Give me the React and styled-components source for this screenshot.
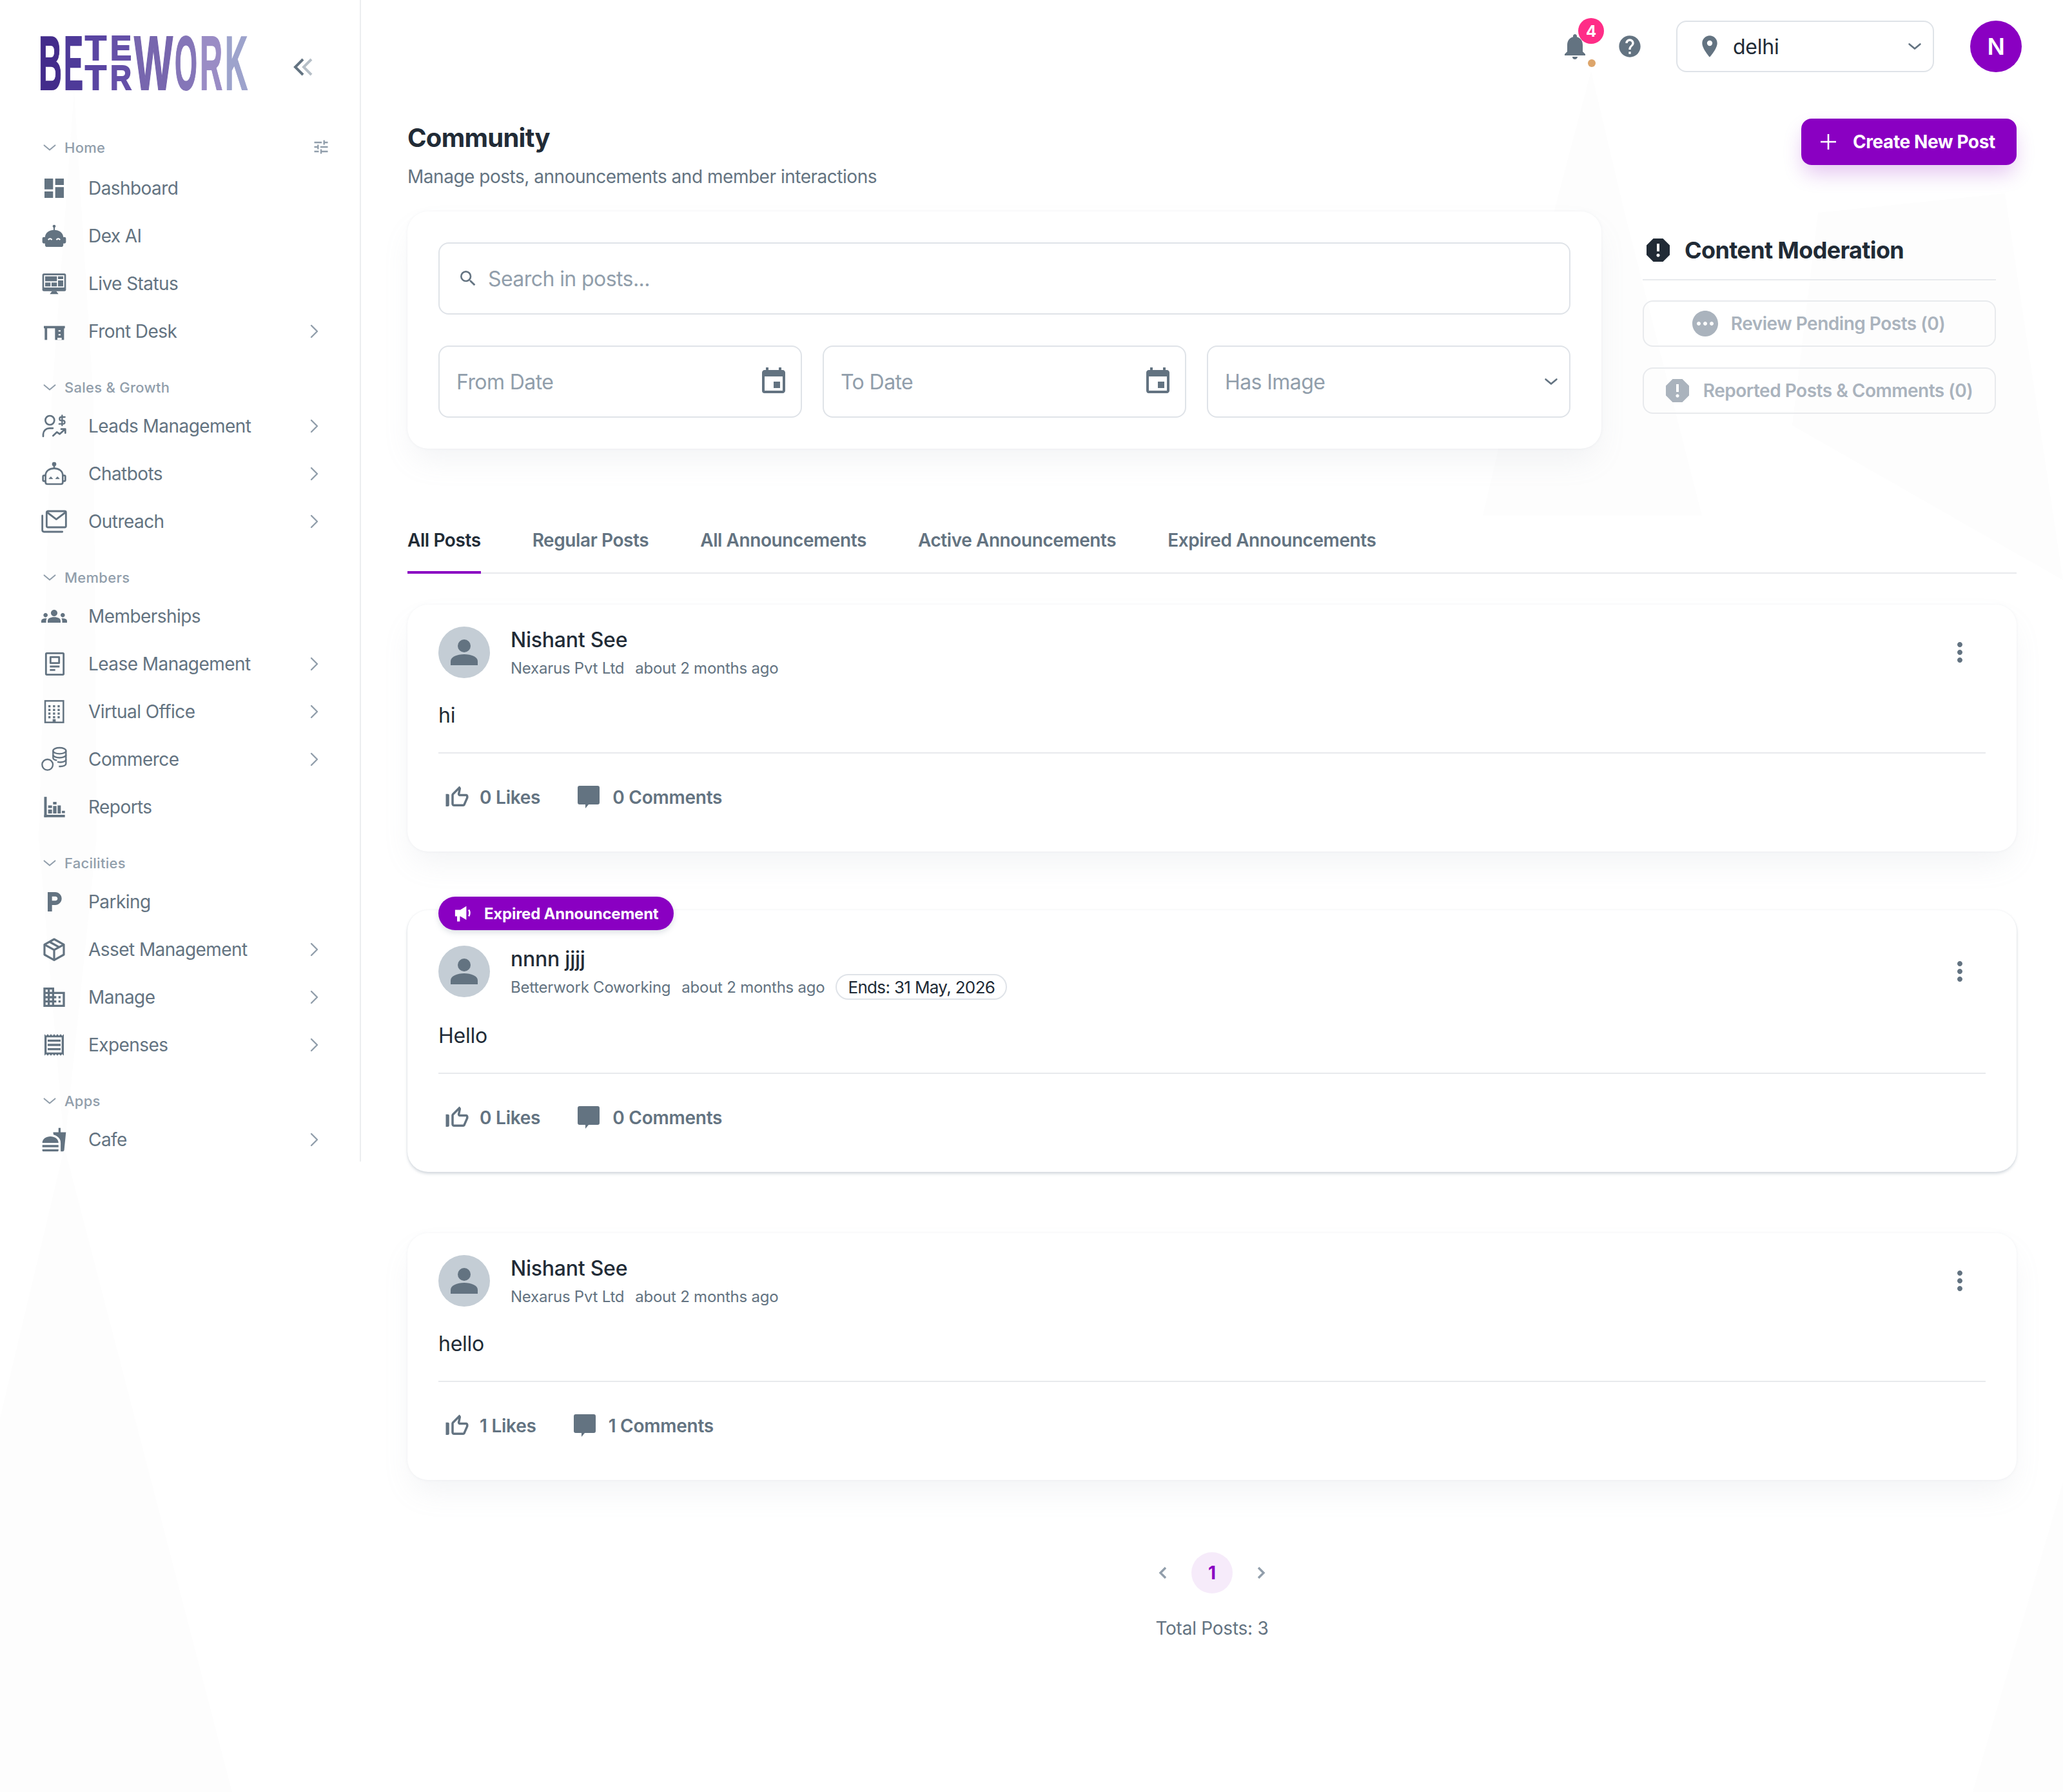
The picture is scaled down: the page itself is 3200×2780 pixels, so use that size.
import React from "react";
import styled, { createGlobalStyle } from "styled-components";
import {
  MdDashboard, MdGroups, MdLocalParking, MdDomain, MdOutlineReceipt, MdFastfood, MdTune,
  MdNotifications, MdHelp, MdLocationOn, MdEvent, MdSearch, MdPending, MdReport,
  MdThumbUpOffAlt, MdMoreVert,
} from "react-icons/md";

const Global = createGlobalStyle`
  html, body { margin: 0; padding: 0; background: #fff; }
  body { font-family: "Inter", "Liberation Sans", sans-serif; color: #212b36; letter-spacing: -0.015em; }
  * { box-sizing: border-box; }
`;

const PURPLE = "#8a00c2";
const GREY = "#637381";
const LIGHT = "#919eab";

const Page = styled.div`
  position: relative;
  width: 3200px;
  min-height: 2780px;
  display: flex;
  align-items: flex-start;
  overflow: hidden;
`;
const Backdrop = styled.svg`
  position: absolute;
  inset: 0;
  z-index: 0;
`;
const Sidebar = styled.aside`
  position: relative;
  z-index: 1;
  flex: none;
  width: 560px;
  height: 1802px;
  border-right: 2px solid #eceef0;
`;
const LogoRow = styled.div`
  height: 209px;
  padding: 54px 0 0 61px;
  display: flex;
  align-items: flex-start;
`;
const LogoArt = styled.svg`
  overflow: visible;
  flex: none;
`;
const Collapse = styled.svg`
  margin: 36px 0 0 68px;
  flex: none;
`;
const Section = styled.section`
  margin-bottom: 34px;
  padding: 0 61px 0 64px;
`;
const SectionHead = styled.div`
  position: relative;
  display: flex;
  align-items: center;
  height: 40px;
  margin-bottom: ${(p) => p.$gap}px;
  color: ${LIGHT};
  font-size: 22px;
  font-weight: 500;
  letter-spacing: 0.012em;
`;
const SectionLabel = styled.span`
  margin-left: 11px;
`;
const SectionChevron = styled.span`
  display: flex;
  margin-left: 1px;
`;
const Tune = styled.span`
  position: absolute;
  right: -15px;
  top: 5px;
  display: flex;
  color: ${LIGHT};
`;
const NavRow = styled.div`
  display: flex;
  align-items: center;
  height: 66px;
  margin-bottom: 8px;
  color: ${GREY};
  font-size: 28px;
  letter-spacing: -0.02em;
  &:last-child { margin-bottom: 0; }
`;
const NavIcon = styled.span`
  flex: none;
  display: flex;
  width: 40px;
  height: 40px;
  margin-right: 33px;
  color: ${GREY};
`;
const NavArrow = styled.svg`
  margin-left: auto;
  flex: none;
  color: ${LIGHT};
`;

const Main = styled.main`
  position: relative;
  z-index: 1;
  flex: 1;
  min-width: 0;
  padding: 0 72px;
`;
const TopBar = styled.header`
  display: flex;
  justify-content: flex-end;
  align-items: center;
  height: 144px;
  margin-right: -8px;
`;
const Bell = styled.div`
  position: relative;
  display: flex;
  color: ${GREY};
  margin-right: 41px;
`;
const BellCount = styled.span`
  position: absolute;
  left: 29px;
  top: -20px;
  width: 40px;
  height: 40px;
  border-radius: 50%;
  background: #ff2d87;
  color: #fff;
  font-size: 24px;
  font-weight: 700;
  display: flex;
  align-items: center;
  justify-content: center;
`;
const BellDot = styled.span`
  position: absolute;
  left: 44px;
  top: 44px;
  width: 12px;
  height: 12px;
  border-radius: 50%;
  background: #dda56b;
`;
const HelpIcon = styled.span`
  display: flex;
  color: ${GREY};
  margin-right: 52px;
`;
const LocationSelect = styled.div`
  display: flex;
  align-items: center;
  width: 400px;
  height: 80px;
  padding: 0 16px 0 30px;
  border: 2px solid #dfe3e8;
  border-radius: 16px;
  background: #fff;
  font-size: 32px;
  color: #212b36;
  margin-right: 56px;
`;
const PinIcon = styled.span`
  display: flex;
  color: ${GREY};
  margin-right: 16px;
`;
const Avatar = styled.div`
  width: 80px;
  height: 80px;
  border-radius: 50%;
  background: ${PURPLE};
  color: #fff;
  font-size: 36px;
  font-weight: 600;
  display: flex;
  align-items: center;
  justify-content: center;
`;
const PageHead = styled.div`
  display: flex;
  justify-content: space-between;
  align-items: flex-start;
  height: 184px;
  padding-top: 40px;
`;
const Title = styled.h1`
  margin: 0;
  font-size: 40px;
  line-height: 60px;
  font-weight: 700;
  letter-spacing: -0.018em;
  color: #212b36;
`;
const Subtitle = styled.p`
  margin: 8px 0 0;
  font-size: 28px;
  line-height: 44px;
  letter-spacing: -0.017em;
  color: ${GREY};
`;
const CreateButton = styled.button`
  display: flex;
  align-items: center;
  width: 334px;
  height: 72px;
  padding: 0 0 0 28px;
  margin: 0;
  border: 0;
  border-radius: 16px;
  background: ${PURPLE};
  color: #fff;
  font: 700 28px "Inter", sans-serif;
  letter-spacing: -0.015em;
  box-shadow: 0 16px 32px -4px rgba(138, 0, 194, 0.24);
`;
const PlusIcon = styled.svg`
  margin-right: 24px;
  flex: none;
`;
const FilterRow = styled.div`
  display: flex;
  align-items: flex-start;
`;
const FilterCard = styled.div`
  width: 1852px;
  height: 368px;
  padding: 48px;
  background: #fff;
  border-radius: 32px;
  box-shadow: 0 0 4px rgba(145, 158, 171, 0.12), 0 24px 48px -8px rgba(145, 158, 171, 0.12);
`;
const Field = styled.div`
  display: flex;
  align-items: center;
  height: 112px;
  width: ${(p) => p.$width};
  padding: ${(p) => p.$pad};
  border: 2px solid #dfe3e8;
  border-radius: 16px;
  background: #fff;
  color: ${LIGHT};
  font-size: 32px;
  letter-spacing: -0.018em;
`;
const FieldRow = styled.div`
  display: flex;
  gap: 32px;
  margin-top: 48px;
`;
const FieldIcon = styled.span`
  display: flex;
  color: ${GREY};
  margin-right: ${(p) => p.$gap || 0}px;
  margin-left: ${(p) => (p.$end ? "auto" : "0")};
`;
const Moderation = styled.aside`
  width: 548px;
  margin-left: 64px;
  padding-top: 36px;
`;
const ModHead = styled.div`
  display: flex;
  align-items: center;
  gap: 17px;
  height: 48px;
  font-size: 36px;
  font-weight: 700;
  letter-spacing: -0.018em;
  color: #212b36;
  margin-bottom: 21px;
`;
const ModDivider = styled.hr`
  margin: 0 0 31px;
  border: 0;
  height: 2px;
  background: #e8eaed;
`;
const ModButton = styled.div`
  display: flex;
  align-items: center;
  justify-content: center;
  gap: 16px;
  height: 72px;
  margin-bottom: 32px;
  padding-right: 6px;
  border: 2px solid #e8eaed;
  border-radius: 16px;
  color: #aab3bd;
  font-size: 28px;
  font-weight: 600;
  letter-spacing: -0.0175em;
`;
const ModIcon = styled.span`
  display: flex;
`;
const Tabs = styled.nav`
  display: flex;
  gap: 80px;
  height: 96px;
  margin-top: 98px;
  margin-bottom: 48px;
  border-bottom: 2px solid #e8eaed;
`;
const Tab = styled.div`
  position: relative;
  height: 96px;
  line-height: 88px;
  font-size: 28px;
  font-weight: 600;
  letter-spacing: -0.015em;
  color: ${(p) => (p.$active ? "#212b36" : GREY)};
  &::after {
    content: "";
    display: ${(p) => (p.$active ? "block" : "none")};
    position: absolute;
    left: 0;
    right: 0;
    bottom: 0;
    height: 4px;
    background: ${PURPLE};
  }
`;
const PostCard = styled.article`
  position: relative;
  padding: ${(p) => (p.$badge ? 55 : 34)}px 48px 48px;
  margin-top: ${(p) => p.$top}px;
  background: #fff;
  border-radius: 32px;
  box-shadow: ${(p) =>
    p.$badge
      ? "0 0 3px rgba(145,158,171,.14), 0 3px 4px rgba(145,158,171,.36)"
      : "0 0 4px rgba(145,158,171,.12), 0 24px 48px -8px rgba(145,158,171,.12)"};
`;
const Badge = styled.div`
  position: absolute;
  left: 48px;
  top: -21px;
  display: flex;
  align-items: center;
  gap: 17px;
  height: 52px;
  padding: 0 24px;
  border-radius: 26px;
  background: ${PURPLE};
  color: #fff;
  font-size: 24px;
  font-weight: 700;
  box-shadow: 0 4px 8px rgba(145, 158, 171, 0.3);
`;
const PostHead = styled.div`
  display: flex;
  align-items: flex-start;
  height: ${(p) => (p.$tall ? 86 : 84)}px;
`;
const PostAvatar = styled.div`
  flex: none;
  width: 80px;
  height: 80px;
  border-radius: 50%;
  background: #c4cdd5;
  display: flex;
  align-items: center;
  justify-content: center;
  color: ${GREY};
  margin-right: 32px;
`;
const Author = styled.div`
  display: flex;
  flex-direction: column;
  min-width: 0;
`;
const AuthorName = styled.div`
  font-size: 32px;
  line-height: 42px;
  font-weight: 500;
  color: #212b36;
`;
const Meta = styled.div`
  display: flex;
  align-items: center;
  gap: 17px;
  height: 44px;
  font-size: 24px;
  color: ${GREY};
`;
const EndChip = styled.span`
  display: flex;
  align-items: center;
  height: 40px;
  padding: 0 17px;
  border: 2px solid #dfe3e8;
  border-radius: 20px;
  font-size: 26px;
  letter-spacing: -0.025em;
  color: #212b36;
`;
const MenuButton = styled.span`
  margin-left: auto;
  display: flex;
  align-items: center;
  justify-content: center;
  width: 80px;
  height: 80px;
  color: ${GREY};
`;
const PostBody = styled.p`
  margin: 30px 0 33px;
  font-size: 32px;
  line-height: 48px;
  color: #212b36;
`;
const PostDivider = styled.hr`
  margin: 0;
  border: 0;
  height: 2px;
  background: #e8eaed;
`;
const Actions = styled.div`
  display: flex;
  align-items: center;
  height: 72px;
  margin-top: 32px;
  padding-left: 8px;
`;
const Action = styled.div`
  display: flex;
  align-items: center;
  gap: ${(p) => p.$gap}px;
  margin-right: 58px;
  color: ${GREY};
  font-size: 28px;
  font-weight: 600;
`;
const ActionIcon = styled.span`
  display: flex;
`;
const Pager = styled.div`
  display: flex;
  justify-content: center;
  align-items: center;
  gap: 12px;
  margin-top: 112px;
`;
const PageArrow = styled.span`
  display: flex;
  align-items: center;
  justify-content: center;
  width: 64px;
  height: 64px;
  color: ${LIGHT};
`;
const PageNumber = styled.span`
  display: flex;
  align-items: center;
  justify-content: center;
  width: 64px;
  height: 64px;
  border-radius: 50%;
  background: rgba(138, 0, 194, 0.08);
  color: ${PURPLE};
  font-size: 28px;
  font-weight: 700;
`;
const Total = styled.div`
  margin-top: 32px;
  text-align: center;
  font-size: 28px;
  line-height: 44px;
  color: ${GREY};
`;

const S = { viewBox: "0 0 24 24", width: 40, height: 40 };
const line = { fill: "none", stroke: "currentColor", strokeWidth: 1.6, strokeLinecap: "round", strokeLinejoin: "round" };

const RobotFill = () => (
  <svg {...S} fill="currentColor">
    <circle cx="12" cy="3" r="1.4" />
    <rect x="11.4" y="3" width="1.2" height="4" />
    <path d="M3.5 13.5C3.5 9 7.5 6.5 12 6.5s8.5 2.500 8.500 7v6.700a2 2 0 0 1-2 2h-13a2 2 0 0 1-2-2z" />
    <rect x="1" y="13" width="3.5" height="6" rx="1.4" />
    <rect x="19.5" y="13" width="3.5" height="6" rx="1.4" />
    <path d="M6.5 15.7q1.7-2.4 3.4 0M14.1 15.7q1.7-2.4 3.4 0" fill="none" stroke="#fff" strokeWidth="1.2" />
  </svg>
);
const Monitor = () => (
  <svg {...S} fill="currentColor">
    <rect x="1" y="2.5" width="22" height="16.5" rx="1.5" />
    <rect x="2.6" y="4.2" width="18.8" height="11.4" fill="#fff" />
    <rect x="3.6" y="5.2" width="11" height="4.6" />
    <rect x="3.6" y="11" width="5" height="3.6" />
    <rect x="9.6" y="11" width="5" height="3.6" />
    <rect x="15.6" y="5.2" width="4.8" height="2.6" />
    <rect x="15.6" y="9" width="4.8" height="5.6" />
    <path d="M10 19h4l2 2.8H8z" />
  </svg>
);
const Desk = () => (
  <svg {...S} fill="currentColor">
    <rect x="2.4" y="7" width="19.6" height="2.2" />
    <rect x="3.2" y="9" width="2.3" height="11" />
    <rect x="12.8" y="9" width="8.4" height="11" />
    <rect x="16" y="11" width="2" height="1.2" fill="#fff" />
    <rect x="16" y="14.6" width="2" height="1.2" fill="#fff" />
    <rect x="15" y="18" width="4" height="2" fill="#fff" />
  </svg>
);
const Leads = () => (
  <svg {...S} {...line}>
    <circle cx="8" cy="6.6" r="4.2" />
    <path d="M1.8 21.6v-2a5.8 5.8 0 0 1 5.8-5.6h3.2" />
    <path d="M11 21l3.6-3.4 2.6 1.8 5-4.6M18.6 14.8h3.8v3.6" />
    <path d="M22 3.6h-3.4a1.5 1.5 0 0 0 0 3.2h1.7a1.5 1.5 0 0 1 0 3.2h-3.6M19.4 2v9.4" strokeWidth="1.4" />
  </svg>
);
const RobotLine = () => (
  <svg {...S} fill="none" stroke="currentColor" strokeWidth="1.6" strokeLinejoin="round">
    <circle cx="12" cy="3" r="1.2" fill="currentColor" />
    <path d="M12 3v3.6" />
    <path d="M4 13.5C4 9.4 7.6 7 12 7s8 2.4 8 6.5v6.5a1.6 1.6 0 0 1-1.6 1.6H5.6A1.6 1.6 0 0 1 4 20z" />
    <path d="M4 13.6H2.6a1 1 0 0 0-1 1v3.2a1 1 0 0 0 1 1H4M20 13.6h1.4a1 1 0 0 1 1 1v3.2a1 1 0 0 1-1 1H20" />
    <path d="M7.2 16.6l1.7-1.8 1.7 1.8zM13.4 16.6l1.7-1.8 1.7 1.8z" fill="currentColor" strokeWidth="0.6" />
  </svg>
);
const MailStack = () => (
  <svg {...S} {...line} strokeWidth="1.7">
    <rect x="5" y="2.4" width="18" height="15" rx="1.2" />
    <path d="M5.6 3.6l8.4 6.4 8.4-6.4" />
    <path d="M1 6.6v13.4a1.6 1.6 0 0 0 1.6 1.6h17" />
  </svg>
);
const LeaseDoc = () => (
  <svg {...S} fill="none" stroke="currentColor" strokeWidth="1.7" strokeLinejoin="round">
    <rect x="4.4" y="2" width="16.4" height="20" rx="0.8" />
    <rect x="8.6" y="5.6" width="8" height="5.6" />
    <path d="M8 14.4h9M8 17.6h5" />
  </svg>
);
const OfficeGrid = () => (
  <svg {...S}>
    <rect x="3.6" y="2" width="17" height="20" fill="none" stroke="currentColor" strokeWidth="1.5" />
    {[6, 9.4, 12.8, 16.2].map((y) =>
      [6.6, 10.9, 15.2].map((x) => <rect key={`${x}-${y}`} x={x} y={y} width="2" height="2" fill="currentColor" />)
    )}
    <rect x="10.6" y="19" width="2.8" height="3" fill="currentColor" />
  </svg>
);
const Coins = () => (
  <svg {...S} fill="none" stroke="currentColor" strokeWidth="1.4">
    <circle cx="5.8" cy="17" r="5" />
    <ellipse cx="17" cy="4" rx="6" ry="2.8" />
    <path d="M11 4v6.600c0 1 1.600 2 3.600 2.400M23 4v12c0 1.500-2.200 2.600-5 2.600h-1.600" />
    <path d="M11 7.800c0 1.500 2.700 2.700 6 2.700s6-1.200 6-2.700M15 14.300c1 .3 2 .4 3 .4 2.600 0 5-1 5-2.700" />
  </svg>
);
const Bars = () => (
  <svg {...S} fill="currentColor">
    <rect x="2.700" y="2.500" width="2.400" height="19" />
    <rect x="2.700" y="19.200" width="19.300" height="2.300" />
    <rect x="6.400" y="10.500" width="3.600" height="2.400" />
    <rect x="6.400" y="14.300" width="3.600" height="3.700" />
    <rect x="11" y="7.200" width="3.200" height="2.400" />
    <rect x="11" y="11" width="3.200" height="7" />
    <rect x="15.200" y="10.500" width="3" height="7.500" />
    <rect x="19.200" y="15.500" width="2.800" height="2.200" />
  </svg>
);
const Cube = () => (
  <svg {...S} fill="none" stroke="currentColor" strokeWidth="1.9" strokeLinejoin="round">
    <path d="M12 2.400l9 5v9.400l-9 5-9-5V7.400z" />
    <path d="M3 7.400l9 5 9-5M12 12.400v9.400M7.600 4.800l9 5" />
  </svg>
);
const Megaphone = () => (
  <svg width="30" height="30" viewBox="0 0 24 24" fill="#fff">
    <path d="M1.500 7.500H8L15.500 3v17L8 15.500H7.500V22H4v-6.500H1.500z" />
    <path d="M18.500 7.500q2.200 4 0 8" fill="none" stroke="#fff" strokeWidth="2" />
  </svg>
);

const Down = ({ size = 20, width = 2.2 }) => (
  <svg width={size} height={size} viewBox="0 0 20 20" fill="none" stroke="currentColor" strokeWidth={width} strokeLinecap="round" strokeLinejoin="round">
    <path d="M3 7l7 6 7-6" />
  </svg>
);
const Arrow = () => (
  <NavArrow width="20" height="24" viewBox="0 0 20 24" fill="none" stroke="currentColor" strokeWidth="2.400" strokeLinecap="round" strokeLinejoin="round">
    <path d="M6 3l9 9-9 9" />
  </NavArrow>
);
const ThickArrow = ({ d }) => (
  <svg width="24" height="24" viewBox="0 0 24 24" fill="none" stroke="currentColor" strokeWidth="3.400">
    <path d={d} />
  </svg>
);
const PersonShape = () => (
  <svg width="42" height="40" viewBox="0 0 42 40" fill="currentColor">
    <circle cx="21" cy="10" r="10" />
    <path d="M0 40v-6c0-7 10-11 21-11s21 4 21 11v6z" />
  </svg>
);
const CommentShape = () => (
  <svg width="34" height="36" viewBox="0 0 34 36" fill="currentColor">
    <path d="M3 0h28a3 3 0 0 1 3 3v23a3 3 0 0 1-3 3H17l-5 6v-6H3a3 3 0 0 1-3-3V3a3 3 0 0 1 3-3z" />
  </svg>
);

const LogoText = ({ x, w, y, size, fill, children }) => (
  <text x={x} y={y} fontSize={size} fontWeight="700" fontFamily="'Liberation Sans', sans-serif" fill={fill} stroke={fill} strokeWidth="2" letterSpacing="0" textLength={w} lengthAdjust="spacingAndGlyphs">
    {children}
  </text>
);
const Logo = () => (
  <LogoArt width="326" height="90" viewBox="0 0 326 90" role="img" aria-label="Betterwork">
    <LogoText x={-1} w={36} y={85} size={118} fill="#432c8b">B</LogoText>
    <LogoText x={38} w={30} y={85} size={118} fill="#4e3a99">E</LogoText>
    <LogoText x={71} w={33} y={39} size={54} fill="#5a45a2">T</LogoText>
    <LogoText x={110} w={33} y={39} size={54} fill="#6550a8">E</LogoText>
    <LogoText x={71} w={33} y={85} size={54} fill="#5a45a2">T</LogoText>
    <LogoText x={110} w={33} y={85} size={54} fill="#6550a8">R</LogoText>
    <LogoText x={147} w={60} y={85} size={118} fill="#7766ae">W</LogoText>
    <LogoText x={210} w={35} y={85} size={118} fill="#8576b8">O</LogoText>
    <LogoText x={249} w={35} y={85} size={118} fill="#9a8cc5">R</LogoText>
    <LogoText x={288} w={35} y={85} size={118} fill="#9da3cc">K</LogoText>
  </LogoArt>
);

const NAV = [
  { head: "Home", tune: true, gap: 10, items: [
    ["Dashboard", <MdDashboard size={40} />],
    ["Dex AI", <RobotFill />],
    ["Live Status", <Monitor />],
    ["Front Desk", <Desk />, true],
  ]},
  { head: "Sales & Growth", gap: 7, items: [
    ["Leads Management", <Leads />, true],
    ["Chatbots", <RobotLine />, true],
    ["Outreach", <MailStack />, true],
  ]},
  { head: "Members", gap: 7, items: [
    ["Memberships", <MdGroups size={40} />],
    ["Lease Management", <LeaseDoc />, true],
    ["Virtual Office", <OfficeGrid />, true],
    ["Commerce", <Coins />, true],
    ["Reports", <Bars />],
  ]},
  { head: "Facilities", gap: 7, items: [
    ["Parking", <MdLocalParking size={40} />],
    ["Asset Management", <Cube />, true],
    ["Manage", <MdDomain size={40} />, true],
    ["Expenses", <MdOutlineReceipt size={40} />, true],
  ]},
  { head: "Apps", gap: 7, items: [["Cafe", <MdFastfood size={40} />, true]] },
];

const POSTS = [
  { top: 0, name: "Nishant See", org: "Nexarus Pvt Ltd", body: "hi", likes: 0, comments: 0 },
  { top: 91, name: "nnnn jjjj", org: "Betterwork Coworking", body: "Hello", likes: 0, comments: 0, badge: "Expired Announcement", ends: "Ends: 31 May, 2026" },
  { top: 95, name: "Nishant See", org: "Nexarus Pvt Ltd", body: "hello", likes: 1, comments: 1 },
];

const TABS = ["All Posts", "Regular Posts", "All Announcements", "Active Announcements", "Expired Announcements"];

export default function App() {
  return (
    <Page>
      <Global />
      <Backdrop width="3200" height="2780" viewBox="0 0 3200 2780">
        <g fill="#fdfdfd">
          <polygon points="115,140 80,620 60,1300 100,1780 150,1300 145,620" />
          <polygon points="100,1780 0,2200 0,2780 360,2780" />
          <polygon points="2468,110 2410,330 2300,800 2640,800 2520,330" />
          <polygon points="2820,330 2780,660 3200,900 3110,300" />
          <polygon points="3200,2300 3060,2780 3200,2780" />
        </g>
      </Backdrop>

      <Sidebar>
        <LogoRow>
          <Logo />
          <Collapse width="30" height="28" viewBox="0 0 30 28" fill="none" strokeWidth="4">
            <path d="M15 2L3 14l12 12" stroke={GREY} />
            <path d="M28 2L16 14l12 12" stroke="#b6bfc7" />
          </Collapse>
        </LogoRow>
        {NAV.map((section) => (
          <Section key={section.head}>
            <SectionHead $gap={section.gap}>
              <SectionChevron>
                <Down size={24} width={1.700} />
              </SectionChevron>
              <SectionLabel>{section.head}</SectionLabel>
              {section.tune && (
                <Tune>
                  <MdTune size={28} />
                </Tune>
              )}
            </SectionHead>
            {section.items.map(([label, icon, more]) => (
              <NavRow key={label}>
                <NavIcon>{icon}</NavIcon>
                {label}
                {more && <Arrow />}
              </NavRow>
            ))}
          </Section>
        ))}
      </Sidebar>

      <Main>
        <TopBar>
          <Bell>
            <MdNotifications size={48} />
            <BellCount>4</BellCount>
            <BellDot />
          </Bell>
          <HelpIcon>
            <MdHelp size={40} />
          </HelpIcon>
          <LocationSelect>
            <PinIcon>
              <MdLocationOn size={40} />
            </PinIcon>
            delhi
            <FieldIcon $end>
              <Down size={24} />
            </FieldIcon>
          </LocationSelect>
          <Avatar>N</Avatar>
        </TopBar>

        <PageHead>
          <div>
            <Title>Community</Title>
            <Subtitle>Manage posts, announcements and member interactions</Subtitle>
          </div>
          <CreateButton>
            <PlusIcon width="28" height="28" viewBox="0 0 28 28" stroke="#fff" strokeWidth="2.600">
              <path d="M14 2v24M2 14h24" />
            </PlusIcon>
            Create New Post
          </CreateButton>
        </PageHead>

        <FilterRow>
          <FilterCard>
            <Field $width="100%" $pad="0 28px">
              <FieldIcon $gap={15}>
                <MdSearch size={32} />
              </FieldIcon>
              Search in posts...
            </Field>
            <FieldRow>
              <Field $width="564px" $pad="0 18px 0 26px">
                From Date
                <FieldIcon $end>
                  <MdEvent size={48} />
                </FieldIcon>
              </Field>
              <Field $width="564px" $pad="0 18px 0 26px">
                To Date
                <FieldIcon $end>
                  <MdEvent size={48} />
                </FieldIcon>
              </Field>
              <Field $width="564px" $pad="0 16px 0 26px">
                Has Image
                <FieldIcon $end>
                  <Down size={24} />
                </FieldIcon>
              </Field>
            </FieldRow>
          </FilterCard>
          <Moderation>
            <ModHead>
              <MdReport size={48} />
              Content Moderation
            </ModHead>
            <ModDivider />
            <ModButton>
              <ModIcon>
                <MdPending size={48} />
              </ModIcon>
              Review Pending Posts (0)
            </ModButton>
            <ModButton>
              <ModIcon>
                <MdReport size={48} />
              </ModIcon>
              Reported Posts &amp; Comments (0)
            </ModButton>
          </Moderation>
        </FilterRow>

        <Tabs>
          {TABS.map((tab, i) => (
            <Tab key={tab} $active={i === 0}>
              {tab}
            </Tab>
          ))}
        </Tabs>

        {POSTS.map((post, i) => (
          <PostCard key={i} $top={post.top} $badge={!!post.badge}>
            {post.badge && (
              <Badge>
                <Megaphone />
                {post.badge}
              </Badge>
            )}
            <PostHead $tall={!!post.ends}>
              <PostAvatar>
                <PersonShape />
              </PostAvatar>
              <Author>
                <AuthorName>{post.name}</AuthorName>
                <Meta>
                  <span>{post.org}</span>
                  <span>about 2 months ago</span>
                  {post.ends && <EndChip>{post.ends}</EndChip>}
                </Meta>
              </Author>
              <MenuButton>
                <MdMoreVert size={48} />
              </MenuButton>
            </PostHead>
            <PostBody>{post.body}</PostBody>
            <PostDivider />
            <Actions>
              <Action $gap={14}>
                <ActionIcon>
                  <MdThumbUpOffAlt size={42} />
                </ActionIcon>
                {post.likes} Likes
              </Action>
              <Action $gap={20}>
                <ActionIcon>
                  <CommentShape />
                </ActionIcon>
                {post.comments} Comments
              </Action>
            </Actions>
          </PostCard>
        ))}

        <Pager>
          <PageArrow>
            <ThickArrow d="M16 4l-8 8 8 8" />
          </PageArrow>
          <PageNumber>1</PageNumber>
          <PageArrow>
            <ThickArrow d="M8 4l8 8-8 8" />
          </PageArrow>
        </Pager>
        <Total>Total Posts: 3</Total>
      </Main>
    </Page>
  );
}
